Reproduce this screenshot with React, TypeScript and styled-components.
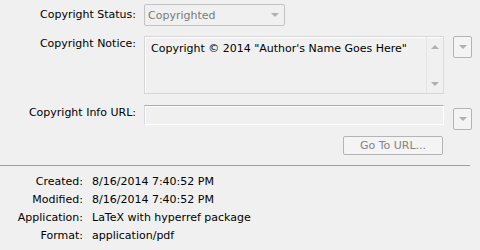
import React from "react";
import styled, { createGlobalStyle } from "styled-components";

const Global = createGlobalStyle`
  html, body { margin: 0; padding: 0; background: #f0f0f0; }
  body { font-family: "DejaVu Sans", sans-serif; font-size: 11px; color: #000; }
`;

const Page = styled.div`
  width: 480px;
  height: 250px;
  background: #f0f0f0;
  padding-top: 4px;
  box-sizing: border-box;
  overflow: hidden;
`;

const Row = styled.div<{ $mt?: number }>`
  display: flex;
  align-items: flex-start;
  margin-top: ${(p) => p.$mt ?? 0}px;
`;

const Label = styled.div<{ $pt?: number }>`
  width: 136px;
  padding-right: 8px;
  text-align: right;
  line-height: 13px;
  padding-top: ${(p) => p.$pt ?? 0}px;
  white-space: nowrap;
  flex: none;
`;

const Select = styled.div`
  width: 141px;
  height: 22px;
  box-sizing: border-box;
  border: 1px solid #c3c3c3;
  border-radius: 2px;
  background: #f0f0f0;
  display: flex;
  align-items: center;
  padding-left: 3px;
  color: #7a7a7a;
`;

const SelectText = styled.span`
  flex: 1;
`;

const Arrow = styled.span<{ $up?: boolean; $color?: string }>`
  width: 0;
  height: 0;
  border-left: 4px solid transparent;
  border-right: 4px solid transparent;
  ${(p) =>
    p.$up
      ? `border-bottom: 4px solid ${p.$color ?? "#b0b0b0"};`
      : `border-top: 4px solid ${p.$color ?? "#b0b0b0"};`}
  flex: none;
`;

const SelectArrow = styled(Arrow)`
  margin-right: 5px;
`;

const TextArea = styled.div`
  width: 300px;
  height: 58px;
  box-sizing: border-box;
  border: 1px solid #d6d6d6;
  border-right-color: #dcdcdc;
  box-shadow: inset 1px 1px 0 #ffffff;
  background: #f0f0f0;
  display: flex;
`;

const AreaText = styled.div`
  flex: 1;
  padding: 5px 0 0 6px;
  line-height: 13px;
  white-space: nowrap;
`;

const ScrollBar = styled.div`
  width: 17px;
  border-left: 1px solid #e6e6e6;
  display: flex;
  flex-direction: column;
  align-items: center;
  justify-content: space-between;
  padding: 8px 0 7px;
  box-sizing: border-box;
`;

const SideButton = styled.div<{ $mt?: number }>`
  width: 19px;
  height: 22px;
  box-sizing: border-box;
  margin-left: 9px;
  margin-top: ${(p) => p.$mt ?? 0}px;
  border: 1px solid #b4b4b4;
  border-radius: 2px;
  background: #f4f4f4;
  display: flex;
  align-items: center;
  justify-content: center;
`;

const Field = styled.div`
  width: 300px;
  height: 20px;
  box-sizing: border-box;
  border: 1px solid #d8d8e0;
  border-top-color: #ababab;
  box-shadow: inset 1px 1px 0 #ffffff;
  border-bottom-color: #ffffff;
  border-right-color: #ffffff;
  background: #f0f0f0;
`;

const ButtonRow = styled.div`
  display: flex;
  justify-content: flex-end;
  width: 443px;
  margin-top: 6px;
`;

const Button = styled.div`
  width: 100px;
  height: 19px;
  box-sizing: border-box;
  border: 1px solid #b4b4b4;
  border-radius: 2px;
  background: #f4f4f4;
  color: #838383;
  display: flex;
  align-items: center;
  justify-content: center;
`;

const Separator = styled.div`
  width: 470px;
  height: 1px;
  background: #a0a0a0;
  margin-top: 10px;
`;

const Info = styled.div`
  display: grid;
  grid-template-columns: 83px 1fr;
  column-gap: 9px;
  padding-top: 7px;
  grid-auto-rows: 18px;
  line-height: 18px;
`;

const InfoLabel = styled.div`
  text-align: right;
  white-space: nowrap;
`;

const InfoValue = styled.div`
  white-space: nowrap;
`;

const info: [string, string][] = [
  ["Created:", "8/16/2014 7:40:52 PM"],
  ["Modified:", "8/16/2014 7:40:52 PM"],
  ["Application:", "LaTeX with hyperref package"],
  ["Format:", "application/pdf"],
];

export default function App() {
  return (
    <Page>
      <Global />
      <Row>
        <Label $pt={4}>Copyright Status:</Label>
        <Select>
          <SelectText>Copyrighted</SelectText>
          <SelectArrow />
        </Select>
      </Row>
      <Row $mt={10}>
        <Label $pt={1}>Copyright Notice:</Label>
        <TextArea>
          <AreaText>Copyright © 2014 "Author's Name Goes Here"</AreaText>
          <ScrollBar>
            <Arrow $up />
            <Arrow />
          </ScrollBar>
        </TextArea>
        <SideButton>
          <Arrow />
        </SideButton>
      </Row>
      <Row $mt={11}>
        <Label $pt={1}>Copyright Info URL:</Label>
        <Field />
        <SideButton $mt={3}>
          <Arrow />
        </SideButton>
      </Row>
      <ButtonRow>
        <Button>Go To URL...</Button>
      </ButtonRow>
      <Separator />
      <Info>
        {info.map(([k, v]) => (
          <React.Fragment key={k}>
            <InfoLabel>{k}</InfoLabel>
            <InfoValue>{v}</InfoValue>
          </React.Fragment>
        ))}
      </Info>
    </Page>
  );
}
